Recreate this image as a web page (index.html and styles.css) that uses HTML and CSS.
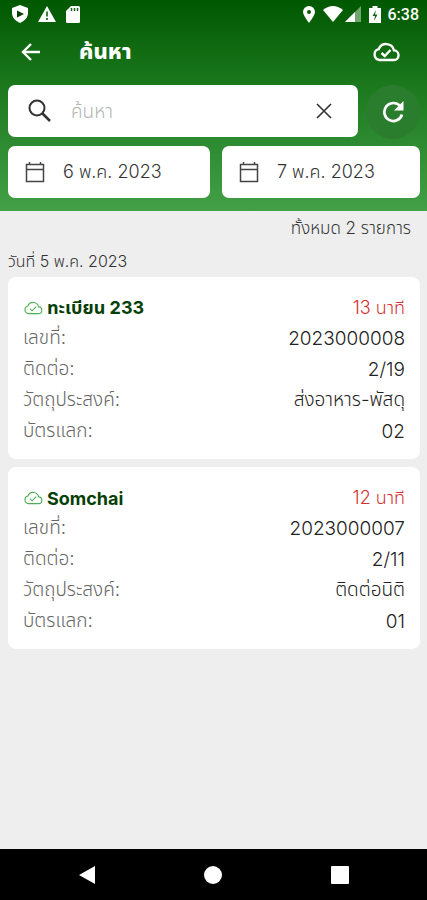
FILE: index.html
```html
<!DOCTYPE html>
<html lang="th">
<head>
<meta charset="utf-8">
<meta name="viewport" content="width=device-width, initial-scale=1">
<title>ค้นหา</title>
<link rel="stylesheet" href="styles.css">
</head>
<body>
<svg class="sprite" aria-hidden="true">
  <symbol id="cloud" viewBox="0 0 28 20">
    <path d="M7.500 18H21.500A4.800 4.800 0 0 0 22 8.400A8 8 0 0 0 6.700 7.200A5.500 5.500 0 0 0 7.500 18Z" fill="none" stroke="currentColor"/>
    <path d="M9.500 11L12.700 14L18.500 8" fill="none" stroke="currentColor"/>
  </symbol>
  <symbol id="calendar" viewBox="0 0 20 22">
    <path d="M1.500 3.500H18.500V20.500H1.500ZM1.500 8.500H18.500M4.500 1V3.500M15.500 1V3.500" fill="none" stroke="currentColor" stroke-width="1.500"/>
  </symbol>
</svg>
<header class="header">
  <div class="status">
    <div class="status-group status-left">
      <svg width="16" height="18" viewBox="0 0 16 18"><path d="M8 0L16 3V9Q15 15 8 18Q1 15 0 9V3Z" fill="#fff"/><path d="M5 5.500L12 9L5 12.500Z" fill="#063f06"/></svg>
      <svg width="18" height="16" viewBox="0 0 18 16"><path d="M9 0L18 16H0Z" fill="#fff"/><path d="M9 5.500V10.500M9 12V14" stroke="#3b803b" stroke-width="2"/></svg>
      <svg width="14" height="17" viewBox="0 0 14 17"><path d="M5 0H12.500Q14 0 14 1.500V15.500Q14 17 12.500 17H1.500Q0 17 0 15.500V5Z" fill="#fff"/><path d="M5.500 2V5M8.500 2V5M11.500 2V5" stroke="#175f17" stroke-width="1.500"/></svg>
    </div>
    <div class="status-group">
      <svg width="12" height="17" viewBox="0 0 12 17"><path d="M6 17Q0 9 0 6A6 6 0 0 1 12 6Q12 9 6 17Z" fill="#fff"/><circle cx="6" cy="6" r="2" fill="#0b5c0b"/></svg>
      <svg class="wifi" width="20" height="16" viewBox="0 0 20 16"><path d="M0 4Q10 -4 20 4L10 16Z" fill="#fff"/></svg>
      <svg class="signal" width="16" height="16" viewBox="0 0 16 16"><path d="M0 16L16 0V16Z" fill="#6fa66f"/><path d="M0 16L10 6V16Z" fill="#fff"/></svg>
      <svg class="battery" width="12" height="17" viewBox="0 0 12 17"><path d="M3.500 0H8.500V2H12V17H0V2H3.500Z" fill="#fff"/><path d="M7 4L3.500 10H6L5 15L8.500 8.500H6Z" fill="#1b641b"/></svg>
      <span class="time">6:38</span>
    </div>
  </div>
  <div class="titlebar">
    <button class="icon-button" aria-label="กลับ"><svg width="20" height="20" viewBox="0 0 20 20"><path d="M19 10H2M10 2L2 10L10 18" fill="none" stroke="#fff" stroke-width="2.400"/></svg></button>
    <h1 class="title">ค้นหา</h1>
    <button class="icon-button" aria-label="ซิงค์"><svg class="cloud-large" width="28" height="20"><use href="#cloud"/></svg></button>
  </div>
  <div class="search-row">
    <div class="search">
      <svg width="24" height="24" viewBox="0 0 24 24"><circle cx="9" cy="9" r="7.500" fill="none" stroke="#333" stroke-width="2"/><path d="M14.500 14.500L22 22" stroke="#333" stroke-width="2.500"/></svg>
      <input class="search-input" type="text" placeholder="ค้นหา" aria-label="ค้นหา">
      <button class="icon-button" aria-label="ล้าง"><svg width="16" height="16" viewBox="0 0 16 16"><path d="M1 1L15 15M15 1L1 15" stroke="#333" stroke-width="1.600"/></svg></button>
    </div>
    <button class="refresh" aria-label="รีเฟรช"><svg width="22" height="22" viewBox="0 0 22 22"><path d="M18.500 5.500A9 9 0 1 0 20 13.500" fill="none" stroke="#fff" stroke-width="2.700"/><path d="M21.500 0V9.500H12Z" fill="#fff"/></svg></button>
  </div>
  <div class="dates">
    <button class="date"><svg class="calendar" width="20" height="22"><use href="#calendar"/></svg><span>6 พ.ค. 2023</span></button>
    <button class="date"><svg class="calendar" width="20" height="22"><use href="#calendar"/></svg><span>7 พ.ค. 2023</span></button>
  </div>
</header>
<main class="content">
  <p class="count">ทั้งหมด 2 รายการ</p>
  <h2 class="day">วันที่ 5 พ.ค. 2023</h2>
  <article class="card">
    <div class="card-head">
      <svg class="cloud-small" width="20" height="14"><use href="#cloud"/></svg>
      <h3 class="name">ทะเบียน 233</h3>
      <span class="elapsed">13 นาที</span>
    </div>
    <dl class="details">
      <div class="line"><dt>เลขที่:</dt><dd>2023000008</dd></div>
      <div class="line"><dt>ติดต่อ:</dt><dd>2/19</dd></div>
      <div class="line"><dt>วัตถุประสงค์:</dt><dd>ส่งอาหาร-พัสดุ</dd></div>
      <div class="line"><dt>บัตรแลก:</dt><dd>02</dd></div>
    </dl>
  </article>
  <article class="card">
    <div class="card-head">
      <svg class="cloud-small" width="20" height="14"><use href="#cloud"/></svg>
      <h3 class="name">Somchai</h3>
      <span class="elapsed">12 นาที</span>
    </div>
    <dl class="details">
      <div class="line"><dt>เลขที่:</dt><dd>2023000007</dd></div>
      <div class="line"><dt>ติดต่อ:</dt><dd>2/11</dd></div>
      <div class="line"><dt>วัตถุประสงค์:</dt><dd>ติดต่อนิติ</dd></div>
      <div class="line"><dt>บัตรแลก:</dt><dd>01</dd></div>
    </dl>
  </article>
</main>
<nav class="nav">
  <button class="nav-button" aria-label="ย้อนกลับ"><svg width="18" height="20" viewBox="0 0 18 20"><path d="M1 10L17 1V19Z" fill="#fff"/></svg></button>
  <button class="nav-button" aria-label="หน้าหลัก"><svg width="18" height="18" viewBox="0 0 18 18"><circle cx="9" cy="9" r="9" fill="#fff"/></svg></button>
  <button class="nav-button" aria-label="แอปล่าสุด"><svg width="18" height="18" viewBox="0 0 18 18"><rect width="18" height="18" rx="1" fill="#fff"/></svg></button>
</nav>
</body>
</html>
```
FILE: styles.css
```css
* { box-sizing: border-box; }

body {
  margin: 0;
  min-height: 100vh;
  display: flex;
  flex-direction: column;
  background: #eee;
  color: #333;
  font-family: Inter, "Noto Sans Thai", "Noto Sans", sans-serif;
  font-size: 19px;
  font-weight: 300;
}

h1, h2, h3, p, dl, dd { margin: 0; }

button {
  border: 0;
  padding: 0;
  background: none;
  color: inherit;
  font: inherit;
}

svg { display: block; flex: none; }

.sprite { position: absolute; width: 0; height: 0; }

.header {
  background: linear-gradient(#005800, #1b781d 40%, #43a047);
  padding-bottom: 13px;
}

.status {
  height: 28px;
  padding: 0 8px 0 12px;
  display: flex;
  align-items: center;
  justify-content: space-between;
}

.status-group { display: flex; align-items: center; }
.status-left { gap: 10px; }
.wifi { margin-left: 8px; }
.signal { margin-left: 2px; }
.battery { margin: 0 7px 0 8px; }

.time {
  color: #fff;
  font-family: Roboto, sans-serif;
  font-size: 16px;
  font-weight: 500;
}

.titlebar {
  height: 48px;
  padding: 0 27px 0 21px;
  display: flex;
  align-items: center;
}

.title {
  flex: 1;
  margin-left: 38px;
  color: #fff;
  font-size: 22px;
  font-weight: 800;
}

.icon-button { display: flex; align-items: center; justify-content: center; }
.cloud-large { color: #fff; stroke-width: 2.4px; }

.search-row {
  padding: 9px 7px 0 8px;
  display: flex;
  gap: 8px;
}

.search {
  flex: 1;
  min-width: 0;
  height: 52px;
  padding: 0 26px 0 20px;
  display: flex;
  align-items: center;
  gap: 19px;
  border-radius: 7px;
  background: #fff;
}

.search-input {
  flex: 1;
  min-width: 0;
  border: 0;
  padding: 0;
  outline: 0;
  background: none;
  color: #333;
  font: inherit;
}

.search-input::placeholder { color: #b5b5b5; }

.refresh {
  width: 54px;
  height: 54px;
  margin-bottom: -2px;
  display: flex;
  align-items: center;
  justify-content: center;
  border-radius: 50%;
  background: #2b7d2e;
}

.dates {
  padding: 9px 7px 0 8px;
  display: grid;
  grid-template-columns: 51fr 50fr;
  gap: 12px;
}

.date {
  height: 52px;
  padding: 0 17px;
  display: flex;
  align-items: center;
  gap: 18px;
  border-radius: 7px;
  background: #fff;
  color: #333;
  font-size: 18px;
}

.calendar { color: #444; }

.content { flex: 1; padding: 0 7px 9px 8px; }

.count {
  height: 34px;
  padding-right: 9px;
  font-size: 17px;
  line-height: 34px;
  text-align: right;
}

.day {
  height: 32px;
  font-size: 16px;
  font-weight: 300;
  line-height: 32px;
}

.card {
  margin-bottom: 8px;
  padding: 16px 15px 12px;
  border-radius: 8px;
  background: #fff;
}

.card-head { height: 30px; display: flex; align-items: center; gap: 4px; }
.cloud-small { color: #4caf50; stroke-width: 1.6px; }

.name {
  flex: 1;
  color: #063f06;
  font-size: 18px;
  font-weight: 700;
}

.elapsed { color: #d32f2f; font-size: 18px; }

.line {
  height: 31px;
  display: flex;
  align-items: center;
  justify-content: space-between;
}

.line dt { color: #666; }
.line dd { color: #222; }

.nav {
  height: 51px;
  padding: 0 24px;
  display: grid;
  grid-template-columns: repeat(3, 1fr);
  background: #000;
}

.nav-button { display: flex; align-items: center; justify-content: center; }
```
